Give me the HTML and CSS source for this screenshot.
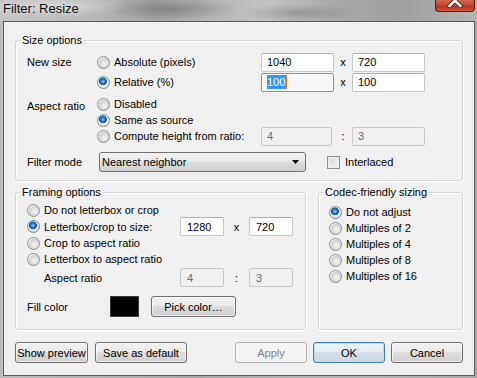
FILE: index.html
```html
<!DOCTYPE html>
<html lang="en">
<head>
  <meta charset="UTF-8">
  <title>Filter: Resize</title>
  <link rel="stylesheet" href="styles.css">
</head>
<body>
  <div class="window">

    <!-- Title bar -->
    <div class="titlebar">
      <span class="title">Filter: Resize</span>
      <div class="close-btn">
        <svg width="38" height="11" viewBox="0 0 38 11">
          <path d="M13.5 -5 L24.5 6 M24.5 -5 L13.5 6" stroke="#5a1a10" stroke-width="4.5" stroke-linecap="round" fill="none"/>
          <path d="M13.5 -5 L24.5 6 M24.5 -5 L13.5 6" stroke="#fff" stroke-width="2.5" stroke-linecap="round" fill="none"/>
        </svg>
      </div>
    </div>

    <div class="client">

      <!-- Size options -->
      <fieldset class="group">
        <legend>Size options</legend>
        <div class="size-grid">
          <span class="lbl">New size</span>
          <label class="opt"><span class="radio"></span>Absolute (pixels)</label>
          <span class="field">1040</span>
          <span class="sep">x</span>
          <span class="field">720</span>

          <label class="opt col2"><span class="radio checked"></span>Relative (%)</label>
          <span class="field focused"><span class="sel">100</span></span>
          <span class="sep">x</span>
          <span class="field">100</span>

          <span class="lbl row-end">Aspect ratio</span>
          <label class="opt row-end"><span class="radio"></span>Disabled</label>

          <label class="opt col2"><span class="radio checked"></span>Same as source</label>

          <label class="opt col2"><span class="radio"></span>Compute height from ratio:</label>
          <span class="field disabled narrow">4</span>
          <span class="sep">:</span>
          <span class="field disabled">3</span>

          <span class="lbl row-end filter-lbl">Filter mode</span>
          <div class="filter-ctrls">
            <div class="dropdown">
              <span>Nearest neighbor</span>
              <svg width="7" height="4" viewBox="0 0 7 4"><path d="M0 0 H7 L3.5 4 Z" fill="#000"/></svg>
            </div>
            <label class="check-opt"><span class="checkbox"></span>Interlaced</label>
          </div>
        </div>
      </fieldset>

      <div class="lower">
        <!-- Framing options -->
        <fieldset class="group framing">
          <legend>Framing options</legend>
          <div class="framing-grid">
            <label class="opt full"><span class="radio"></span>Do not letterbox or crop</label>

            <label class="opt"><span class="radio checked"></span>Letterbox/crop to size:</label>
            <span class="field">1280</span>
            <span class="sep">x</span>
            <span class="field">720</span>

            <label class="opt full"><span class="radio"></span>Crop to aspect ratio</label>
            <label class="opt full"><span class="radio"></span>Letterbox to aspect ratio</label>

            <span class="lbl indent">Aspect ratio</span>
            <span class="field disabled">4</span>
            <span class="sep">:</span>
            <span class="field disabled">3</span>

            <div class="fill-row">
              <span class="fill-lbl">Fill color</span>
              <span class="swatch"></span>
              <button class="btn pick">Pick color…</button>
            </div>
          </div>
        </fieldset>

        <!-- Codec-friendly sizing -->
        <fieldset class="group codec">
          <legend>Codec-friendly sizing</legend>
          <div class="codec-list">
            <label class="opt"><span class="radio checked"></span>Do not adjust</label>
            <label class="opt"><span class="radio"></span>Multiples of 2</label>
            <label class="opt"><span class="radio"></span>Multiples of 4</label>
            <label class="opt"><span class="radio"></span>Multiples of 8</label>
            <label class="opt"><span class="radio"></span>Multiples of 16</label>
          </div>
        </fieldset>
      </div>

      <!-- Dialog buttons -->
      <div class="buttons">
        <button class="btn preview">Show preview</button>
        <button class="btn save">Save as default</button>
        <button class="btn apply">Apply</button>
        <button class="btn ok">OK</button>
        <button class="btn cancel">Cancel</button>
      </div>
    </div>
  </div>
</body>
</html>
```

FILE: styles.css
```css
/* General */
* {
  box-sizing: border-box;
}
body {
  margin: 0;
  width: 477px;
  height: 378px;
  overflow: hidden;
  font-family: "Liberation Sans", Arial, sans-serif;
  font-size: 11px;
  color: #000;
  background: linear-gradient(90deg, #bdbdbd, #a8a8a8 40%, #b6b6b6 70%, #a9a9a9);
}
.window {
  display: flex;
  flex-direction: column;
  height: 378px;
}

/* Title bar */
.titlebar {
  height: 21px;
  display: flex;
  align-items: flex-start;
  padding: 0 2px 0 3px;
  background:
    radial-gradient(ellipse 70px 12px at 170px 9px, rgba(105, 105, 105, 0.55), transparent),
    radial-gradient(ellipse 60px 9px at 300px 13px, rgba(115, 115, 115, 0.45), transparent),
    radial-gradient(ellipse 80px 10px at 60px 6px, rgba(255, 255, 255, 0.35), transparent),
    linear-gradient(90deg, #c6c6c6 0%, #bababa 18%, #a4a4a4 32%, #b9b9b9 46%, #c3c3c3 56%, #a9a9a9 70%, #a0a0a0 85%, #b4b4b4 100%);
}
.title {
  font-size: 13px;
  line-height: 16px;
  margin-top: 1px;
  color: #101010;
  text-shadow: 0 0 6px rgba(255, 255, 255, 0.7);
}
.close-btn {
  margin-left: auto;
  width: 40px;
  height: 12px;
  border: 1px solid #5b1c12;
  border-top: none;
  border-radius: 0 0 4px 4px;
  background: linear-gradient(#d36650, #c4452d 50%, #b3301a 55%, #cc5a3c);
  overflow: hidden;
}
.close-btn svg {
  display: block;
}

/* Client area */
.client {
  flex: 1;
  margin: 0 2px 2px 3px;
  border: 1px solid #5c5c5c;
  background: #f0f0f0;
  padding: 11px 11px 0 11px;
}

/* Group boxes */
.group {
  margin: 0;
  padding: 0;
  min-width: 0;
  border: 1px solid #d5d5d5;
  border-radius: 3px;
  box-shadow: 1px 1px 0 #fff, inset 1px 1px 0 #fff;
}
.group legend {
  margin-left: 4px;
  padding: 0 2px;
  line-height: 14px;
}

/* Size options */
.size-grid {
  display: grid;
  grid-template-columns: 70px 164px 73px 18px 73px;
  grid-template-rows: 20px 20px 20px 16px 16px 28px;
  align-items: center;
  margin: 5px 0 8px 11px;
}
.col2 {
  grid-column: 2;
}
.lbl {
  grid-column: 1;
}
.row-end {
  align-self: end;
}
.filter-lbl {
  height: 19px;
  line-height: 19px;
}
.filter-ctrls {
  grid-column: 2 / span 4;
  align-self: end;
  display: flex;
  align-items: center;
}

/* Radio / checkbox */
.opt {
  display: flex;
  align-items: center;
  gap: 4px;
  height: 16px;
  white-space: nowrap;
}
.radio {
  width: 13px;
  height: 13px;
  flex: none;
  border: 1px solid #8e8f8f;
  border-radius: 50%;
  background: radial-gradient(circle at 60% 60%, #f4f4f4 0, #e2e2e2 3px, #cfcfcf 5.5px, #f2f2f2 6px);
}
.radio.checked {
  border-color: #7a8a99;
  background: radial-gradient(circle at 45% 40%, #9ad6ff 0, #3a8fe0 1.5px, #1c5fa8 3px, #1a4c80 3.6px, #eef3f7 4.2px, #dfe5ea 5.5px);
}
.check-opt {
  display: flex;
  align-items: center;
  gap: 5px;
  margin-left: 21px;
}
.checkbox {
  width: 13px;
  height: 13px;
  border: 1px solid #8f8f8f;
  background: linear-gradient(135deg, #cdd1d6, #f6f6f6);
  box-shadow: inset 0 0 0 2px #eeeeee;
}

/* Text fields */
.field {
  height: 19px;
  border: 1px solid #c4c8cc;
  border-top-color: #abadb3;
  border-radius: 2px;
  background: #fff;
  padding-left: 5px;
  display: flex;
  align-items: center;
}
.field.narrow {
  width: 71px;
}
.field.disabled {
  background: #f0f0f0;
  border-color: #c9c9c9;
  color: #6d6d6d;
}
.field.focused {
  border-color: #569de5;
  background: #f7f7f7;
  box-shadow: inset 0 0 0 1px #fff;
}
.sel {
  background: #3399ff;
  color: #fff;
  line-height: 14px;
  border-right: 2px solid #e8751a;
}
.sep {
  text-align: center;
}

/* Dropdown */
.dropdown {
  width: 207px;
  height: 20px;
  margin-left: 2px;
  border: 1px solid #707070;
  border-radius: 3px;
  background: linear-gradient(#f2f2f2 0%, #ebebeb 45%, #dddddd 50%, #cfcfcf 100%);
  display: flex;
  align-items: center;
  justify-content: space-between;
  padding: 0 6px 0 2px;
}

/* Lower groups */
.lower {
  display: flex;
  gap: 12px;
  margin-top: 4px;
}
.framing {
  width: 291px;
  flex: none;
}
.codec {
  flex: 1;
}
.framing-grid {
  display: grid;
  grid-template-columns: 153px 44px 25px 44px;
  grid-template-rows: 16px 17px 16px 16px 21px 29px;
  align-items: center;
  margin: 3px 0 12px 11px;
}
.full {
  grid-column: 1 / -1;
}
.indent {
  padding-left: 17px;
}
.framing-grid .field {
  padding-left: 6px;
}
.fill-row {
  grid-column: 1 / -1;
  align-self: end;
  display: flex;
  align-items: center;
  height: 21px;
}
.fill-lbl {
  width: 83px;
}
.swatch {
  width: 29px;
  height: 21px;
  background: #000;
  border: 1px solid #3a3a3a;
  margin-right: 12px;
}
.codec-list {
  margin: 5px 0 0 10px;
}

/* Buttons */
.btn {
  height: 21px;
  padding: 0;
  border: 1px solid #707070;
  border-radius: 3px;
  background: linear-gradient(#f2f2f2 0%, #ebebeb 45%, #dddddd 50%, #cfcfcf 100%);
  box-shadow: inset 0 0 0 1px rgba(255, 255, 255, 0.6);
  font: inherit;
  color: #000;
}
.pick {
  width: 85px;
}
.buttons {
  display: flex;
  margin-top: 12px;
}
.preview {
  width: 73px;
}
.save {
  width: 92px;
  margin-left: 7px;
}
.apply {
  width: 72px;
  margin-left: auto;
  border-color: #adb2b5;
  background: #f4f4f4;
  color: #838383;
  box-shadow: none;
}
.ok {
  width: 72px;
  margin-left: 6px;
  border-color: #3c7fb1;
  background: linear-gradient(#eef3f8 0%, #e4ebf2 45%, #d6dfe9 50%, #c9d5e2 100%);
  box-shadow: inset 0 0 0 1px #b8dcf2;
}
.cancel {
  width: 72px;
  margin-left: 6px;
}
```
